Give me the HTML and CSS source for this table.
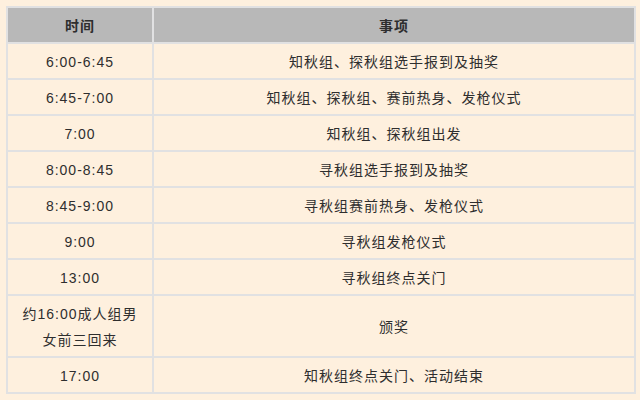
FILE: index.html
```html
<!DOCTYPE html>
<html lang="zh">
<head>
<meta charset="utf-8">
<link rel="stylesheet" href="styles.css">
</head>
<body>
<div class="page">
<table class="schedule">
  <thead>
    <tr><th class="col-time">时间</th><th>事项</th></tr>
  </thead>
  <tbody>
    <tr><td>6:00-6:45</td><td>知秋组、探秋组选手报到及抽奖</td></tr>
    <tr><td>6:45-7:00</td><td>知秋组、探秋组、赛前热身、发枪仪式</td></tr>
    <tr><td>7:00</td><td>知秋组、探秋组出发</td></tr>
    <tr><td>8:00-8:45</td><td>寻秋组选手报到及抽奖</td></tr>
    <tr><td>8:45-9:00</td><td>寻秋组赛前热身、发枪仪式</td></tr>
    <tr><td>9:00</td><td>寻秋组发枪仪式</td></tr>
    <tr><td>13:00</td><td>寻秋组终点关门</td></tr>
    <tr><td>约16:00成人组男女前三回来</td><td>颁奖</td></tr>
    <tr><td>17:00</td><td>知秋组终点关门、活动结束</td></tr>
  </tbody>
</table>
</div>
</body>
</html>
```

FILE: styles.css
```css
html, body {
  margin: 0;
  padding: 0;
  background: #fef0de;
}
.page {
  padding: 6px;
}
.schedule {
  width: 630px;
  border-collapse: collapse;
  font-family: "Liberation Sans", "Noto Sans CJK SC", sans-serif;
  font-size: 14px;
  line-height: 26px;
  letter-spacing: 1px;
  color: #2e2e2e;
  border: 2px solid #e1e1e2;
}
.schedule th,
.schedule td {
  border: 2px solid #e1e1e2;
  padding: 5px 10px 3px;
  text-align: center;
  vertical-align: middle;
}
.schedule th {
  background: #b8b8b8;
  font-weight: bold;
}
.schedule .col-time {
  width: 124px;
}
```
